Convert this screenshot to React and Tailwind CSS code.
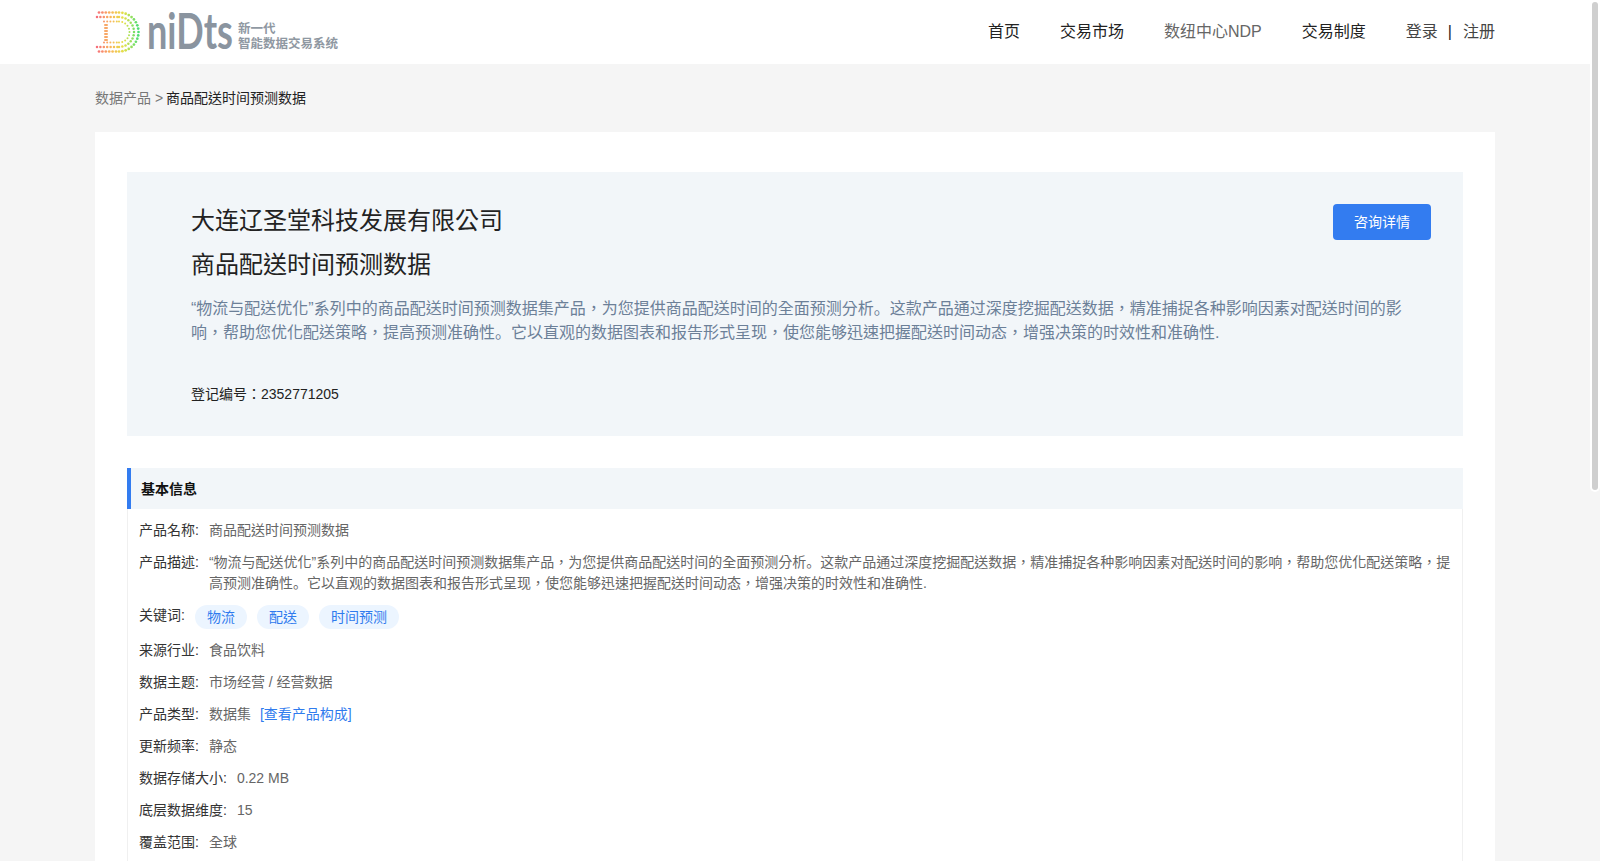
const FONT = 'font-["Liberation_Sans","Noto_Sans_CJK_TC",sans-serif]'

const STOPS = [
  [0, [245, 95, 130]],
  [0.35, [250, 180, 90]],
  [0.65, [228, 225, 70]],
  [1, [60, 222, 120]],
]

function dotColor(t) {
  for (let i = 1; i < STOPS.length; i++) {
    if (t <= STOPS[i][0]) {
      const [a, ca] = STOPS[i - 1]
      const [b, cb] = STOPS[i]
      const k = (t - a) / (b - a)
      return `rgb(${ca.map((c, j) => Math.round(c + (cb[j] - c) * k)).join(',')})`
    }
  }
  return 'rgb(60,222,120)'
}

// one ring of the D: straight top edge, half circle, straight bottom edge
function ringDots(x0, r, step) {
  const cx = 25
  const cy = 20
  const dots = []
  for (let x = x0; x < cx; x += step) {
    dots.push([x, cy - r])
    dots.push([x, cy + r])
  }
  const n = Math.round((Math.PI * r) / step)
  for (let i = 0; i <= n; i++) {
    const a = -Math.PI / 2 + (Math.PI * i) / n
    dots.push([cx + r * Math.cos(a), cy + r * Math.sin(a)])
  }
  return dots
}

function LogoMark() {
  const rings = [
    [5, 19.5, 3.4, 1.35],
    [3, 15, 3.4, 1.25],
    [10, 10.5, 3.2, 1],
  ]
  const stem = [13, 16, 19, 22, 25, 28]
  return (
    <svg width="46" height="42" viewBox="0 0 46 42" className="shrink-0">
      {rings.map(([x0, r, step, size]) =>
        ringDots(x0, r, step).map(([x, y], i) => (
          <circle key={`${r}-${i}`} cx={x} cy={y + 1} r={size} fill={dotColor(x / 46)} />
        ))
      )}
      {stem.map((y) => (
        <rect key={y} x="10" y={y} width="4" height="2" rx="1" fill="#f7a868" />
      ))}
    </svg>
  )
}

function Logo() {
  return (
    <div className="flex items-center -ml-[1px]">
      <LogoMark />
      <svg width="91" height="62" viewBox="0 0 91 62" className="ml-[7px] shrink-0">
        <text
          x="0"
          y="37"
          transform="scale(0.95 1.3)"
          fontFamily="Lato, sans-serif"
          fontSize="38"
          fontWeight="700"
          fill="#8a949f"
        >
          niDts
        </text>
      </svg>
      <div className="mt-[10px] flex flex-col text-[12.5px] leading-[15px] font-bold text-[#8f98a2]">
        <span>新一代</span>
        <span>智能数据交易系统</span>
      </div>
    </div>
  )
}

function Nav() {
  return (
    <nav className="flex items-center gap-10 text-base text-[#222]">
      <a>首页</a>
      <a>交易市场</a>
      <a className="text-[#666]">数纽中心NDP</a>
      <a>交易制度</a>
      <div className="flex items-center text-[#444]">
        <a>登录</a>
        <span className="mx-[10px] text-[#222]">|</span>
        <a className="ml-px">注册</a>
      </div>
    </nav>
  )
}

// the full stop sits low in the reference while commas are centred
function Stop() {
  return <span className='inline-block font-["Liberation_Sans","Noto_Sans_CJK_SC",sans-serif]'>。</span>
}

function Description() {
  return (
    <>
      “物流与配送优化”系列中的商品配送时间预测数据集产品，为您提供商品配送时间的全面预测分析<Stop />这款产品通过深度挖掘配送数据，精准捕捉各种影响因素对配送时间的影响，帮助您优化配送策略，提高预测准确性<Stop />它以直观的数据图表和报告形式呈现，使您能够迅速把握配送时间动态，增强决策的时效性和准确性.
    </>
  )
}

function Row({ label, children }) {
  return (
    <div className="flex text-sm leading-[21px] mb-[11px]">
      <span className="shrink-0 text-[#333] mr-[10px]">{label}:</span>
      <div className="text-[#666]">{children}</div>
    </div>
  )
}

function Chip({ children }) {
  return (
    <span className="h-6 px-3 flex items-center rounded-xl bg-[#ecf5ff] text-sm text-[#2f7bee]">
      {children}
    </span>
  )
}

export default function App() {
  return (
    <div className={`relative h-[861px] overflow-hidden bg-[#f5f5f5] ${FONT}`}>
      <header className="h-16 bg-white flex items-center justify-between pl-[95px] pr-[105px]">
        <Logo />
        <Nav />
      </header>

      <div className="w-[1400px] ml-[95px]">
        <div className="h-[68px] flex items-center text-sm text-[#777]">
          数据产品 &gt;&nbsp;<span className="text-[#222] -ml-px">商品配送时间预测数据</span>
        </div>

        <main className="bg-white px-8 pt-10 pb-10">
          <section className="h-[264px] bg-[#f2f6f9] pt-8 pr-8 pl-16">
            <div className="flex justify-between items-start">
              <div className="text-2xl leading-[44px] text-[#222]">
                <h1 className="-mt-[5px]">大连辽圣堂科技发展有限公司</h1>
                <h2>商品配送时间预测数据</h2>
              </div>
              <button className="w-[98px] h-9 rounded bg-[#337cf0] text-sm text-white">咨询详情</button>
            </div>
            <p className="mt-[10px] w-[1216px] text-base leading-6 text-[#6c8098]">
              <Description />
            </p>
            <p className="mt-[39px] text-sm leading-[21px] text-[#222]">登记编号：2352771205</p>
          </section>

          <section className="mt-8">
            <h3 className="h-[41px] flex items-center bg-[#f2f6f9] border-l-4 border-[#337cf0] pl-[10px] text-sm font-bold text-[#111]">
              基本信息
            </h3>
            <div className="border-x border-[#f0f0f0] pt-[11px] pl-[11px] pr-[10px] pb-10">
              <Row label="产品名称">商品配送时间预测数据</Row>
              <Row label="产品描述">
                <Description />
              </Row>
              <div className="flex text-sm leading-[21px] mb-[11px]">
                <span className="shrink-0 text-[#333] mr-[10px]">关键词:</span>
                <div className="flex gap-[10px]">
                  <Chip>物流</Chip>
                  <Chip>配送</Chip>
                  <Chip>时间预测</Chip>
                </div>
              </div>
              <Row label="来源行业">食品饮料</Row>
              <Row label="数据主题">市场经营 / 经营数据</Row>
              <Row label="产品类型">
                数据集<a className="ml-[9px] text-[#2f7bee]">[查看产品构成]</a>
              </Row>
              <Row label="更新频率">静态</Row>
              <Row label="数据存储大小">0.22 MB</Row>
              <Row label="底层数据维度">15</Row>
              <Row label="覆盖范围">全球</Row>
            </div>
          </section>
        </main>
      </div>

      {/* overlay scrollbar */}
      <div className="absolute top-0 right-0 w-[10px] h-[492px] bg-white rounded-b-md p-[2px]">
        <div className="h-full rounded-full bg-[#cfcfcf]" />
      </div>
    </div>
  )
}
